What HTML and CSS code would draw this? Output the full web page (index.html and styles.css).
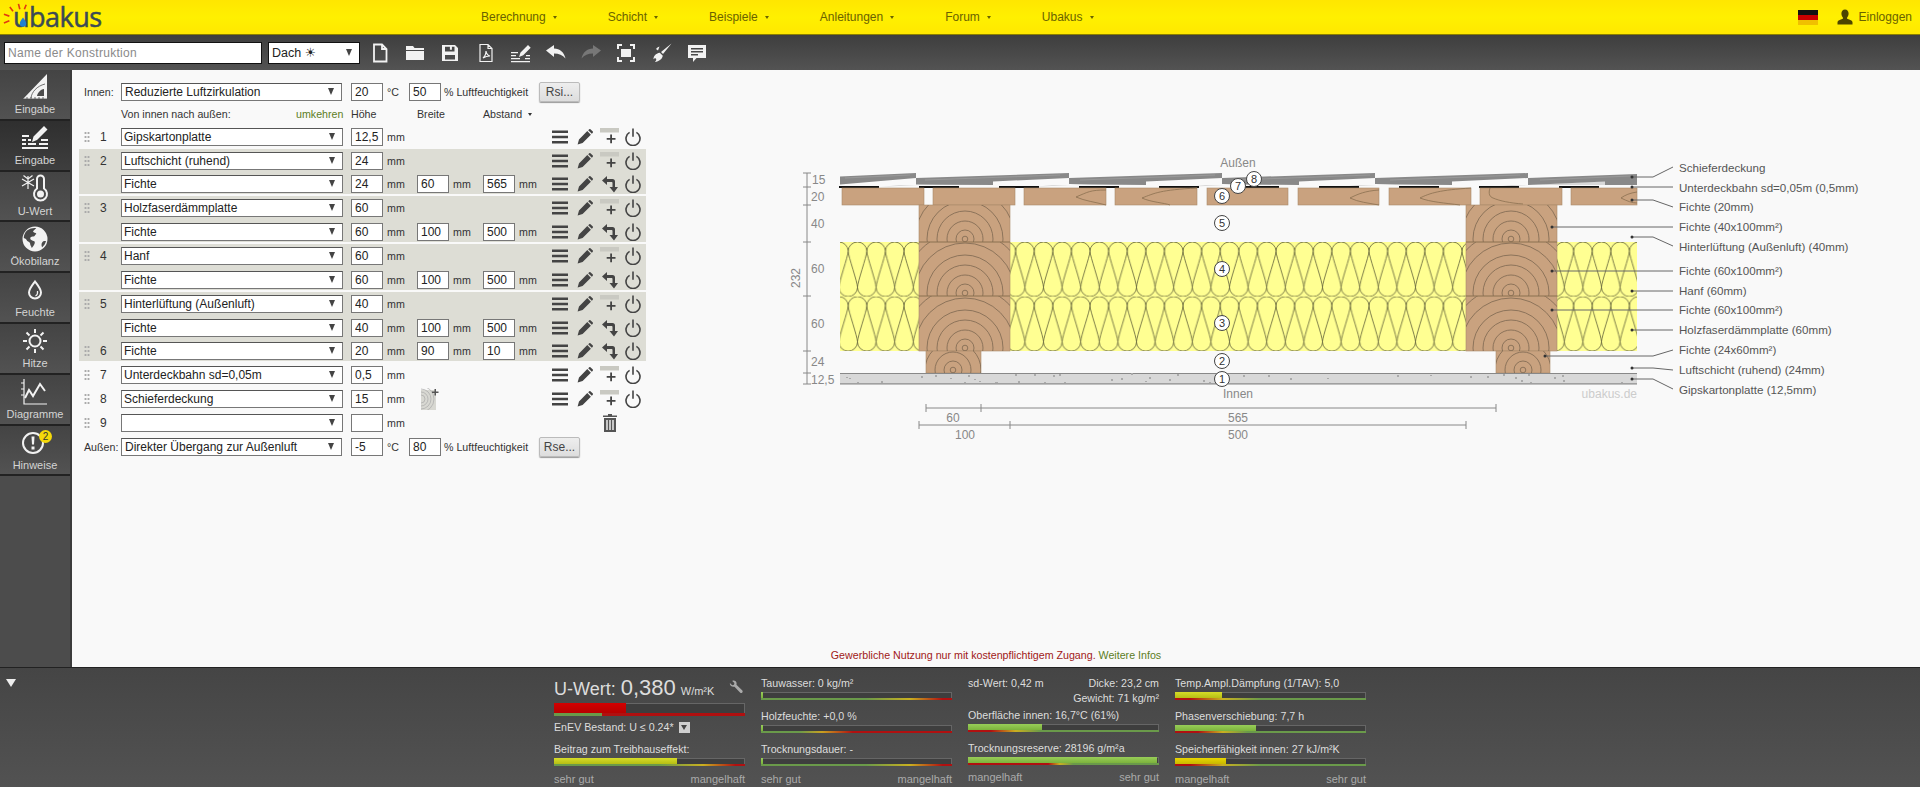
FILE: index.html
```html
<!DOCTYPE html>
<html lang="de">
<head>
<meta charset="utf-8">
<title>ubakus</title>
<link rel="stylesheet" href="styles.css">
</head>
<body>
<svg class="defs" aria-hidden="true">
  <symbol id="i-menu" viewBox="0 0 16 16"><path d="M0 1.500h16v2.600H0zM0 6.700h16v2.600H0zM0 11.900h16v2.600H0z"/></symbol>
  <symbol id="i-pencil" viewBox="0 0 16 16"><path d="M.6 15.400 2 10.400 10.300 2.100l3.600 3.600-8.300 8.300zM11.200 1.200 12 .4a1.200 1.200 0 0 1 1.700 0l1.900 1.900a1.200 1.200 0 0 1 0 1.700l-.8.8z"/></symbol>
  <symbol id="i-add" viewBox="0 0 20 20"><rect class="add-bar" x="0" y="1" width="19" height="4.500"/><path d="M10.200 7.500h1.800v3.500h3.500v1.800h-3.500v3.500h-1.800v-3.500H6.700V11h3.500z"/></symbol>
  <symbol id="i-power" viewBox="0 0 16 18"><path class="line" d="M4.600 4.400a7 7 0 1 0 6.800 0M8 .6v8.200"/></symbol>
  <symbol id="i-back" viewBox="0 0 20 20"><path d="M2 6.500 7 2v3h5.500c1.600 0 2.500.9 2.500 2.500v5.500h3L14 18.500 9.500 13h3V9c0-.6-.4-1-1-1H7v3z"/></symbol>
  <symbol id="rings" viewBox="-80 -80 160 160" overflow="visible"><g class="ring"><circle r="2.800"/><circle r="9"/><circle r="18"/><circle r="28"/><circle r="38"/><circle r="50"/><circle r="62"/></g></symbol>
  <pattern id="wool" patternUnits="userSpaceOnUse" x="848.2" y="242" width="18.6" height="54.600">
    <path class="wool-line" d="M0 9.300A9.300 9.300 0 0 1 18.600 9.300C18.600 14 9.300 40 9.300 45.300A9.300 9.300 0 0 0 27.900 45.300C27.900 40 18.600 14 18.600 9.300"/>
    <path class="wool-line" d="M-18.600 9.300A9.300 9.300 0 0 1 0 9.300C0 14-9.300 40-9.300 45.300A9.300 9.300 0 0 0 9.300 45.300C9.300 40 0 14 0 9.300"/>
  </pattern>
  <clipPath id="clip-a"><rect x="919" y="205" width="91" height="37"/></clipPath>
  <clipPath id="clip-b"><rect x="919" y="242" width="91" height="54"/></clipPath>
  <clipPath id="clip-c"><rect x="919" y="296" width="91" height="55"/></clipPath>
  <clipPath id="clip-d"><rect x="926" y="351" width="55" height="22"/></clipPath>
  <clipPath id="clip-e"><rect x="1466" y="205" width="91" height="37"/></clipPath>
  <clipPath id="clip-f"><rect x="1466" y="242" width="91" height="54"/></clipPath>
  <clipPath id="clip-g"><rect x="1466" y="296" width="91" height="55"/></clipPath>
  <clipPath id="clip-h"><rect x="1496" y="351" width="54" height="22"/></clipPath>
</svg>

<header class="topbar">
  <a class="logo">
    <svg class="logo-art" viewBox="0 0 44 34">
      <g class="logo-rays"><path d="M17 2l1.500 6M7.500 5.500l3.500 4.500M1 13.500l6 2M1 23l6-2.500M25.500 3l-2 5"/></g>
      <path class="logo-drop" d="M22 17c2.500 3.300 3.500 5 3.500 6.700a3.500 3.500 0 0 1-7 0c0-1.700 1-3.400 3.500-6.700z"/>
    </svg>
    <span>ubakus</span>
  </a>
  <nav class="menu">
    <span>Berechnung</span><span>Schicht</span><span>Beispiele</span><span>Anleitungen</span><span>Forum</span><span>Ubakus</span>
  </nav>
  <div class="account">
    <svg class="flag" viewBox="0 0 20 15"><rect width="20" height="5" fill="#111"/><rect y="5" width="20" height="5" fill="#c80000"/><rect y="10" width="20" height="5" fill="#f0c000"/></svg>
    <svg class="person" viewBox="0 0 16 16"><path d="M8 .5c2.300 0 3.600 1.700 3.600 4 0 1.700-.7 3-1.500 3.900v1.300c2.800.8 5.400 1.700 5.400 3.600v2.200H.5v-2.200c0-1.900 2.600-2.800 5.400-3.600V8.400C5.100 7.500 4.400 6.200 4.400 4.500c0-2.300 1.300-4 3.600-4z"/></svg>
    <span>Einloggen</span>
  </div>
</header>

<div class="toolbar">
  <input class="name" type="text" placeholder="Name der Konstruktion">
  <div class="sel sel-type"><select><option>Dach ☀</option></select></div>
  <div class="tools">
    <svg viewBox="0 0 20 20"><path class="tool-line" d="M4 1.500h8l4.500 4.500v12.500H4zM12 1.500V6h4.500"/></svg>
    <svg viewBox="0 0 20 20"><path d="M1 3h7l1.500 2H19v2H1zM1 8h18v9H1z"/></svg>
    <svg viewBox="0 0 20 20"><path d="M2 2h13l3 3v13H2zm3 1.800v4.700h9.500V3.800h-2.600v3h-2v-3zM5 12v4.500h10V12z" fill-rule="evenodd"/></svg>
    <svg viewBox="0 0 20 20"><path class="tool-thin" d="M4 1.500h8l4 4v13H4zM12 1.500v4h4M7 15c2-1.500 3-4 3-7 .5 3 2 4.500 4 5-2.500 0-5 .7-7 2z"/></svg>
    <svg viewBox="0 0 20 20"><path d="M0 9h7v1.300H0zM0 12h5v1.300H0zM0 15h9v1.300H0zM0 18h19v1.300H0zM14 15h5v1.300h-5zM15 12h4v1.300h-4zM8 14l1.500-4.500L17 2l2.700 2.700-7.500 7.500z"/></svg>
    <svg viewBox="0 0 20 20"><path d="M0 7.500 8 2v3.500c6 .3 10 3.500 11.500 10C16.500 12 13 10.500 8 10.500V14z"/></svg>
    <svg class="off" viewBox="0 0 20 20"><path d="M20 7.500 12 2v3.500C6 5.800 2 9 .5 15.500 3.500 12 7 10.500 12 10.500V14z"/></svg>
    <svg viewBox="0 0 20 20"><path d="M1 1h5v2H3v3H1zM14 1h5v5h-2V3h-3zM1 14h2v3h3v2H1zM17 14h2v5h-5v-2h3zM5 6h10v8H5z"/></svg>
    <svg viewBox="0 0 20 20"><path d="M19.500.500l-8.500 10.500-2-2zM7.800 9.800l3 3c-.5 3-3.500 5.700-8 6.200 1.700-1.400 1.700-3 1-3.500-.7-.5-1.800.4-2.300.8 0-3 2-5.800 6.300-6.500zM4 6c.8-1.200 2-2 3.500-2.500L6 7.500z"/></svg>
    <svg viewBox="0 0 20 20"><path d="M1 2h18v13h-9.500L6 19v-4H1zm3 3v1.500h12V5zm0 3v1.500h12V8zm0 3v1.500h7V11z" fill-rule="evenodd"/></svg>
  </div>
</div>

<div class="middle">
  <aside class="sidebar">
    <a class="nav-item">
      <svg viewBox="0 0 30 30"><path d="M3 27 27 2v25zM17 24h7v-7c-3.500.6-6.400 3.500-7 7z" fill-rule="evenodd"/><path class="nav-cut" d="M11 26c.6-6 6-12 14-14M3 27h24M7 27v-2M11 27v-2M15 27v-2M19 27v-2M23 27v-2"/></svg>
      <span>Eingabe</span>
    </a>
    <a class="nav-item active">
      <svg viewBox="0 0 30 30"><path d="M2 12h7v2H2zM2 16h4v2H2zM2 20h4v2H2zM8 16h3v2H8zM8 20h8v2H8zM2 24h26v2H2zM19 20h9v2h-9zM21 16h7v2h-7zM12 19l1.500-5.500L24 3l3.500 3.500L17 17z"/></svg>
      <span>Eingabe</span>
    </a>
    <a class="nav-item">
      <svg viewBox="0 0 30 30"><path class="nav-line" d="M17 14V5a3.500 3.500 0 0 1 7 0v9.500a6.500 6.500 0 1 1-7 0z"/><circle cx="20.500" cy="20" r="3.500"/><path class="nav-thin" d="M8 2v13M2 5l12 7M14 5 2 12M3.500 1.500 8 5l4.500-3.500"/></svg>
      <span>U-Wert</span>
    </a>
    <a class="nav-item">
      <svg viewBox="0 0 30 30"><path d="M15 2.500a12.500 12.500 0 1 1 0 25 12.500 12.500 0 0 1 0-25zM7 6.500C5 8.500 3.800 11 3.800 14c1.700.3 2.800 1.500 3.400 3 1.400 1 3 1 3 3 0 1.500 1 2 1.600 4 1.700-2 3.200-4 3-6-.2-1.500-3.400-1-4.400-3-.8-1.500 1-2.800 3-2.500 1.500 0 1.500-2 3-2.500-.7-1.800-2.700-1-3.400-2.500 1-1.500 2-2 3.200-3.300C15 3.500 10 4 7 6.500zM24 17c-1.500.5-2.500 2-2.500 4 0 .8.3 1.600.7 2.200 2-1.700 3.200-3.700 3.800-6.200z" fill-rule="evenodd"/></svg>
      <span>Ökobilanz</span>
    </a>
    <a class="nav-item">
      <svg viewBox="0 0 30 30"><path class="nav-line" d="M15 6.500c3.600 4.700 6 7.500 6 11a6 6 0 0 1-12 0c0-3.500 2.400-6.300 6-11z"/><path class="nav-thin" d="M17.500 16c.5 2.500-.5 4-2 5"/></svg>
      <span>Feuchte</span>
    </a>
    <a class="nav-item">
      <svg viewBox="0 0 30 30"><circle class="nav-line" cx="15" cy="15" r="5.500"/><path class="nav-line" d="M15 3v4M15 23v4M3 15h4M23 15h4M6.500 6.500l3 3M20.500 20.500l3 3M6.500 23.500l3-3M20.500 9.500l3-3"/></svg>
      <span>Hitze</span>
    </a>
    <a class="nav-item">
      <svg viewBox="0 0 30 30"><path class="nav-thin" d="M4 2v25h23M1 6h3M1 12h3M1 18h3"/><path class="nav-line" d="M5 21l4-8 4 6 7-12 5 7"/></svg>
      <span>Diagramme</span>
    </a>
    <a class="nav-item">
      <svg viewBox="0 0 30 30"><circle class="nav-line" cx="13" cy="15" r="10"/><path d="M11.500 8.500h3l-.5 8h-2zM11.500 18.500h3v3h-3z"/></svg>
      <span>Hinweise</span>
      <b class="badge">2</b>
    </a>
  </aside>

  <main class="content">
    <div class="work">
      <form class="form">
        <div class="env">
          <label>Innen:</label>
          <div class="sel sel-wide"><select><option>Reduzierte Luftzirkulation</option></select></div>
          <input class="num env-first" value="20"><span class="unit-c">°C</span>
          <input class="num" value="50"><span class="unit-p">% Luftfeuchtigkeit</span>
          <button type="button" class="btn">Rsi...</button>
        </div>
        <div class="heads">
          <span class="h-title">Von innen nach außen:</span>
          <a class="h-link">umkehren</a>
          <span class="h-a">Höhe</span><span class="h-b">Breite</span><span class="h-c">Abstand</span>
        </div>

        <div class="row">
          <span class="id"><i class="grip"></i><em>1</em></span>
          <div class="sel"><select><option>Gipskartonplatte</option></select></div>
          <input class="num" value="12,5"><span class="mm">mm</span>
          <div class="icons"><svg class="i16"><use href="#i-menu"/></svg><svg class="i16 gap9"><use href="#i-pencil"/></svg><svg class="i20"><use href="#i-add"/></svg><svg class="i16 pow"><use href="#i-power"/></svg></div>
        </div>

        <div class="group">
          <div class="row">
            <span class="id"><i class="grip"></i><em>2</em></span>
            <div class="sel"><select><option>Luftschicht (ruhend)</option></select></div>
            <input class="num" value="24"><span class="mm">mm</span>
            <div class="icons"><svg class="i16"><use href="#i-menu"/></svg><svg class="i16 gap9"><use href="#i-pencil"/></svg><svg class="i20"><use href="#i-add"/></svg><svg class="i16 pow"><use href="#i-power"/></svg></div>
          </div>
          <div class="row">
            <span class="id"></span>
            <div class="sel"><select><option>Fichte</option></select></div>
            <input class="num" value="24"><span class="mm">mm</span><input class="num" value="60"><span class="mm">mm</span><input class="num" value="565"><span class="mm">mm</span>
            <div class="icons"><svg class="i16"><use href="#i-menu"/></svg><svg class="i16 gap9"><use href="#i-pencil"/></svg><svg class="i20"><use href="#i-back"/></svg><svg class="i16 pow"><use href="#i-power"/></svg></div>
          </div>
        </div>

        <div class="group">
          <div class="row">
            <span class="id"><i class="grip"></i><em>3</em></span>
            <div class="sel"><select><option>Holzfaserdämmplatte</option></select></div>
            <input class="num" value="60"><span class="mm">mm</span>
            <div class="icons"><svg class="i16"><use href="#i-menu"/></svg><svg class="i16 gap9"><use href="#i-pencil"/></svg><svg class="i20"><use href="#i-add"/></svg><svg class="i16 pow"><use href="#i-power"/></svg></div>
          </div>
          <div class="row">
            <span class="id"></span>
            <div class="sel"><select><option>Fichte</option></select></div>
            <input class="num" value="60"><span class="mm">mm</span><input class="num" value="100"><span class="mm">mm</span><input class="num" value="500"><span class="mm">mm</span>
            <div class="icons"><svg class="i16"><use href="#i-menu"/></svg><svg class="i16 gap9"><use href="#i-pencil"/></svg><svg class="i20"><use href="#i-back"/></svg><svg class="i16 pow"><use href="#i-power"/></svg></div>
          </div>
        </div>

        <div class="group">
          <div class="row">
            <span class="id"><i class="grip"></i><em>4</em></span>
            <div class="sel"><select><option>Hanf</option></select></div>
            <input class="num" value="60"><span class="mm">mm</span>
            <div class="icons"><svg class="i16"><use href="#i-menu"/></svg><svg class="i16 gap9"><use href="#i-pencil"/></svg><svg class="i20"><use href="#i-add"/></svg><svg class="i16 pow"><use href="#i-power"/></svg></div>
          </div>
          <div class="row">
            <span class="id"></span>
            <div class="sel"><select><option>Fichte</option></select></div>
            <input class="num" value="60"><span class="mm">mm</span><input class="num" value="100"><span class="mm">mm</span><input class="num" value="500"><span class="mm">mm</span>
            <div class="icons"><svg class="i16"><use href="#i-menu"/></svg><svg class="i16 gap9"><use href="#i-pencil"/></svg><svg class="i20"><use href="#i-back"/></svg><svg class="i16 pow"><use href="#i-power"/></svg></div>
          </div>
        </div>

        <div class="group">
          <div class="row">
            <span class="id"><i class="grip"></i><em>5</em></span>
            <div class="sel"><select><option>Hinterlüftung (Außenluft)</option></select></div>
            <input class="num" value="40"><span class="mm">mm</span>
            <div class="icons"><svg class="i16"><use href="#i-menu"/></svg><svg class="i16 gap9"><use href="#i-pencil"/></svg><svg class="i20"><use href="#i-add"/></svg><svg class="i16 pow"><use href="#i-power"/></svg></div>
          </div>
          <div class="row">
            <span class="id"></span>
            <div class="sel"><select><option>Fichte</option></select></div>
            <input class="num" value="40"><span class="mm">mm</span><input class="num" value="100"><span class="mm">mm</span><input class="num" value="500"><span class="mm">mm</span>
            <div class="icons"><svg class="i16"><use href="#i-menu"/></svg><svg class="i16 gap9"><use href="#i-pencil"/></svg><svg class="i20"><use href="#i-back"/></svg><svg class="i16 pow"><use href="#i-power"/></svg></div>
          </div>
          <div class="row">
            <span class="id"><i class="grip"></i><em>6</em></span>
            <div class="sel"><select><option>Fichte</option></select></div>
            <input class="num" value="20"><span class="mm">mm</span><input class="num" value="90"><span class="mm">mm</span><input class="num" value="10"><span class="mm">mm</span>
            <div class="icons"><svg class="i16"><use href="#i-menu"/></svg><svg class="i16 gap9"><use href="#i-pencil"/></svg><svg class="i20"><use href="#i-back"/></svg><svg class="i16 pow"><use href="#i-power"/></svg></div>
          </div>
        </div>

        <div class="row">
          <span class="id"><i class="grip"></i><em>7</em></span>
          <div class="sel"><select><option>Unterdeckbahn sd=0,05m</option></select></div>
          <input class="num" value="0,5"><span class="mm">mm</span>
          <div class="icons"><svg class="i16"><use href="#i-menu"/></svg><svg class="i16 gap9"><use href="#i-pencil"/></svg><svg class="i20"><use href="#i-add"/></svg><svg class="i16 pow"><use href="#i-power"/></svg></div>
        </div>
        <div class="row">
          <span class="id"><i class="grip"></i><em>8</em></span>
          <div class="sel"><select><option>Schieferdeckung</option></select></div>
          <input class="num" value="15"><span class="mm">mm</span>
          <svg class="texture" viewBox="0 0 18 22"><rect x="0" y="2" width="15" height="20" fill="#d8d8d2"/><g class="ring"><circle cx="0" cy="11" r="4"/><circle cx="0" cy="11" r="7"/><circle cx="0" cy="11" r="10"/><circle cx="0" cy="11" r="13"/></g><path d="M13.500 1h1.500v2.500h2.500V5H15v2.500h-1.500V5H11V3.500h2.500z" fill="#555"/></svg>
          <div class="icons"><svg class="i16"><use href="#i-menu"/></svg><svg class="i16 gap9"><use href="#i-pencil"/></svg><svg class="i20"><use href="#i-add"/></svg><svg class="i16 pow"><use href="#i-power"/></svg></div>
        </div>
        <div class="row">
          <span class="id"><i class="grip"></i><em>9</em></span>
          <div class="sel"><select><option></option></select></div>
          <input class="num" value=""><span class="mm">mm</span>
          <div class="icons"><svg class="trash" viewBox="0 0 14 18"><path d="M5 0h4v1.500h5V3H0V1.500h5zM1 4h12v14H1zm2.300 2v10h1.400V6zm3 0v10h1.400V6zm3 0v10h1.400V6z" fill-rule="evenodd"/></svg></div>
        </div>

        <div class="env">
          <label>Außen:</label>
          <div class="sel sel-wide"><select><option>Direkter Übergang zur Außenluft</option></select></div>
          <input class="num env-first" value="-5"><span class="unit-c">°C</span>
          <input class="num" value="80"><span class="unit-p">% Luftfeuchtigkeit</span>
          <button type="button" class="btn">Rse...</button>
        </div>
      </form>

      <svg class="drawing" viewBox="780 150 1140 300">
        <!-- slates -->
        <path class="sheet" d="M880 187 993 181v4H900zM1033 187l113-6v4h-93zM1186 187l113-6v4h-93zM1339 187l113-6v4h-93zM1492 187l113-6v4h-93z"/>
        <path class="slate" d="M840 176.500 916 173v5l-76 6.500zM916 178 1069 173v5l-76 3.500v3.500L916 184.500zM1069 178 1222 173v5l-76 3.500v3.500l-77-1zM1222 178 1375 173v5l-76 3.500v3.500l-77-1zM1375 178 1528 173v5l-76 3.500v3.500l-77-1zM1528 178 1637 174v11h-32v-3.500l-77 3.500z"/>
        <path class="slate-shine" d="M845 178 910 175M925 180 1060 175M1080 180 1215 175M1235 180 1370 175M1390 180 1520 175M1540 180 1630 176"/>
        <path class="felt" d="M839 187H1637"/>
        <!-- battens -->
        <g class="wood">
          <rect x="842" y="188" width="82" height="17"/><rect x="933" y="188" width="82" height="17"/><rect x="1024" y="188" width="82" height="17"/><rect x="1115" y="188" width="82" height="17"/><rect x="1207" y="188" width="81" height="17"/><rect x="1298" y="188" width="81" height="17"/><rect x="1389" y="188" width="82" height="17"/><rect x="1480" y="188" width="82" height="17"/><rect x="1571" y="188" width="66" height="17"/>
        </g>
        <path class="grain" d="M1106 190C1090 190 1088 192 1076 197 1085 201 1095 202 1106 205M1197 188C1160 190 1155 193 1142 198 1150 202 1165 203 1170 205M1379 190C1365 191 1358 194 1350 198 1358 202 1368 203 1379 205M1471 188C1440 190 1430 193 1420 198 1430 202 1445 203 1460 205M1490 188C1488 194 1490 197 1493 198 1500 201 1510 203 1523 204M1637 192C1630 193 1625 195 1621 198 1627 201 1632 203 1637 203"/>
        <!-- insulation -->
        <rect class="wool-base" x="840" y="242" width="797" height="109"/>
        <rect x="840" y="242" width="797" height="54.600" fill="url(#wool)"/>
        <rect x="840" y="296.600" width="797" height="54.400" fill="url(#wool)"/>
        <!-- timbers -->
        <g class="wood">
          <rect x="919" y="205" width="91" height="146"/><rect x="926" y="351" width="55" height="22"/>
          <rect x="1466" y="205" width="91" height="146"/><rect x="1496" y="351" width="54" height="22"/>
        </g>
        <g class="ring">
          <g clip-path="url(#clip-a)"><use href="#rings" x="885" y="159" width="160" height="160"/></g>
          <g clip-path="url(#clip-b)"><use href="#rings" x="885" y="213" width="160" height="160"/></g>
          <g clip-path="url(#clip-c)"><use href="#rings" x="885" y="268" width="160" height="160"/></g>
          <g clip-path="url(#clip-d)"><use href="#rings" x="873" y="290" width="160" height="160"/></g>
          <g clip-path="url(#clip-e)"><use href="#rings" x="1431" y="159" width="160" height="160"/></g>
          <g clip-path="url(#clip-f)"><use href="#rings" x="1431" y="213" width="160" height="160"/></g>
          <g clip-path="url(#clip-g)"><use href="#rings" x="1431" y="268" width="160" height="160"/></g>
          <g clip-path="url(#clip-h)"><use href="#rings" x="1443" y="290" width="160" height="160"/></g>
        </g>
        <path class="edge" d="M919 242H1010M919 296H1010M1466 242H1557M1466 296H1557"/>
        <!-- plasterboard -->
        <rect class="gyps" x="840" y="373.500" width="797" height="10"/>
        <path class="gyps-line" d="M840 373.500H1637M840 383.800H1637"/>
        <path class="speck" d="M846 377h2v1h-2zM849 378h2v1h-2zM857 382h2v1h-2zM881 381h2v2h-2zM921 376h2v2h-2zM935 375h2v2h-2zM950 378h2v1h-2zM964 382h2v1h-2zM968 375h2v2h-2zM974 379h2v1h-2zM979 381h2v1h-2zM995 382h3v1h-3zM1015 374h2v2h-2zM1018 381h2v2h-2zM1034 374h2v2h-2zM1044 382h2v1h-2zM1053 375h2v2h-2zM1059 374h2v2h-2zM1064 382h2v1h-2zM1111 379h2v2h-2zM1121 378h2v2h-2zM1131 373h2v2h-2zM1145 381h2v1h-2zM1149 377h2v2h-2zM1169 379h2v2h-2zM1177 374h2v2h-2zM1203 380h2v2h-2zM1209 382h2v1h-2zM1243 375h2v2h-2zM1268 375h2v2h-2zM1290 378h2v2h-2zM1327 378h2v1h-2zM1397 375h2v2h-2zM1430 375h2v1h-2zM1470 376h2v2h-2zM1487 376h2v2h-2zM1503 374h2v2h-2zM1515 377h2v2h-2zM1521 380h2v2h-2zM1528 374h2v2h-2zM1530 382h2v1h-2zM1554 377h2v2h-2zM1562 375h2v2h-2zM1563 380h2v2h-2zM1621 382h2v1h-2z"/>
        <!-- dimensions -->
        <path class="dim" d="M807 173V384M803 173h8M803 187h8M803 205h8M803 242h8M803 296h8M803 351h8M803 373h8M803 384h8M926 408H1496M926 404v8M981 404v8M1496 404v8M919 425H1466M919 421v8M1010 421v8M1466 421v8"/>
        <g class="dim-text">
          <text x="812" y="184">15</text><text x="811" y="201">20</text><text x="811" y="228">40</text><text x="811" y="273">60</text><text x="811" y="328">60</text><text x="811" y="366">24</text><text x="811" y="384">12,5</text>
          <text x="797" y="278" transform="rotate(-90 797 278)" text-anchor="middle" dominant-baseline="middle">232</text>
          <text x="953" y="422" text-anchor="middle">60</text><text x="1238" y="422" text-anchor="middle">565</text>
          <text x="965" y="439" text-anchor="middle">100</text><text x="1238" y="439" text-anchor="middle">500</text>
          <text x="1238" y="167" text-anchor="middle">Außen</text><text x="1238" y="398" text-anchor="middle">Innen</text>
        </g>
        <text class="mark" x="1637" y="398" text-anchor="end">ubakus.de</text>
        <!-- layer numbers -->
        <g class="badges">
          <circle cx="1222" cy="379" r="7.500"/><circle cx="1222" cy="361" r="7.500"/><circle cx="1222" cy="323" r="7.500"/><circle cx="1222" cy="269" r="7.500"/><circle cx="1222" cy="223" r="7.500"/><circle cx="1222" cy="196" r="7.500"/><circle cx="1238" cy="186" r="7.500"/><circle cx="1254" cy="179" r="7.500"/>
        </g>
        <g class="badge-text" text-anchor="middle">
          <text x="1222" y="383">1</text><text x="1222" y="365">2</text><text x="1222" y="327">3</text><text x="1222" y="273">4</text><text x="1222" y="227">5</text><text x="1222" y="200">6</text><text x="1238" y="190">7</text><text x="1254" y="183">8</text>
        </g>
        <!-- callouts -->
        <path class="leader" d="M1632 177h21l20-10M1632 187h21l20 0M1632 200h21l20 7M1552 227h121M1632 237h21l20 9M1552 271h121M1632 291h41M1552 310h121M1632 330h41M1545 356h108l20-6M1632 368h21l20 2M1632 379h21l20 10"/>
        <g class="dots">
          <circle cx="1632" cy="177" r="1.500"/><circle cx="1632" cy="187" r="1.500"/><circle cx="1632" cy="200" r="1.500"/><circle cx="1552" cy="227" r="1.500"/><circle cx="1632" cy="237" r="1.500"/><circle cx="1552" cy="271" r="1.500"/><circle cx="1632" cy="291" r="1.500"/><circle cx="1552" cy="310" r="1.500"/><circle cx="1632" cy="330" r="1.500"/><circle cx="1545" cy="356" r="1.500"/><circle cx="1632" cy="368" r="1.500"/><circle cx="1632" cy="379" r="1.500"/>
        </g>
        <g class="legend">
          <text x="1679" y="172">Schieferdeckung</text>
          <text x="1679" y="192">Unterdeckbahn sd=0,05m (0,5mm)</text>
          <text x="1679" y="211">Fichte (20mm)</text>
          <text x="1679" y="231">Fichte (40x100mm²)</text>
          <text x="1679" y="251">Hinterlüftung (Außenluft) (40mm)</text>
          <text x="1679" y="275">Fichte (60x100mm²)</text>
          <text x="1679" y="295">Hanf (60mm)</text>
          <text x="1679" y="314">Fichte (60x100mm²)</text>
          <text x="1679" y="334">Holzfaserdämmplatte (60mm)</text>
          <text x="1679" y="354">Fichte (24x60mm²)</text>
          <text x="1679" y="374">Luftschicht (ruhend) (24mm)</text>
          <text x="1679" y="394">Gipskartonplatte (12,5mm)</text>
        </g>
      </svg>
    </div>
    <p class="notice"><span>Gewerbliche Nutzung nur mit kostenpflichtigem Zugang.</span> <a>Weitere Infos</a></p>
  </main>
</div>

<footer class="results">
  <span class="collapse"></span>
  <section class="col">
    <div class="u-line"><span>U-Wert:</span> <strong>0,380</strong> <small>W/m²K</small>
      <svg class="wrench" viewBox="0 0 16 16"><path d="M1 3.500 3.700 6l2-.5L6.200 3.500 3.700 1c2.500-1 5 .5 5 3 0 .5 0 1-.2 1.400l6.500 6.400c.8 1 .8 1.700.2 2.500-.8.800-1.800.8-2.600 0L6.300 7.600C3.800 8.500.5 6.500 1 3.500z"/></svg>
    </div>
    <div class="bar big"><i class="f-red" style="width:38%"></i></div>
    <div class="scale-line s-u"></div>
    <div class="enev">EnEV Bestand: U ≤ 0.24* <span class="pick"></span></div>
    <div class="metric after-enev"><div class="m-label">Beitrag zum Treibhauseffekt:</div><div class="bar"><i class="f-lime" style="width:65%"></i></div><div class="scale-line s-high"></div></div>
    <div class="scale"><span>sehr gut</span><span>mangelhaft</span></div>
  </section>
  <section class="col">
    <div class="metric"><div class="m-label">Tauwasser: 0 kg/m²</div><div class="bar"><i class="f-green" style="width:1%"></i></div><div class="scale-line s-high"></div></div>
    <div class="metric"><div class="m-label">Holzfeuchte: +0,0 %</div><div class="bar"><i class="f-green" style="width:1%"></i></div><div class="scale-line s-mid"></div></div>
    <div class="metric"><div class="m-label">Trocknungsdauer: -</div><div class="bar"><i class="f-green" style="width:1%"></i></div><div class="scale-line s-high"></div></div>
    <div class="scale"><span>sehr gut</span><span>mangelhaft</span></div>
  </section>
  <section class="col col-sd">
    <div class="sd"><div class="sd-top"><span>sd-Wert: 0,42 m</span><span>Dicke: 23,2 cm</span></div><div class="sd-end">Gewicht: 71 kg/m²</div></div>
    <div class="metric"><div class="m-label">Oberfläche innen: 16,7°C (61%)</div><div class="bar"><i class="f-green" style="width:39%"></i></div><div class="scale-line s-rise1"></div></div>
    <div class="metric"><div class="m-label">Trocknungsreserve: 28196 g/m²a</div><div class="bar"><i class="f-green" style="width:100%"></i></div><div class="scale-line s-rise2"></div></div>
    <div class="scale"><span>mangelhaft</span><span>sehr gut</span></div>
  </section>
  <section class="col">
    <div class="metric"><div class="m-label">Temp.Ampl.Dämpfung (1/TAV): 5,0</div><div class="bar"><i class="f-lime" style="width:25%"></i></div><div class="scale-line s-rise3"></div></div>
    <div class="metric"><div class="m-label">Phasenverschiebung: 7,7 h</div><div class="bar"><i class="f-green" style="width:43%"></i></div><div class="scale-line s-rise1"></div></div>
    <div class="metric"><div class="m-label">Speicherfähigkeit innen: 27 kJ/m²K</div><div class="bar"><i class="f-yellow" style="width:27%"></i></div><div class="scale-line s-rise3"></div></div>
    <div class="scale"><span>mangelhaft</span><span>sehr gut</span></div>
  </section>
</footer>
</body>
</html>
```

FILE: styles.css
```css
* { box-sizing: border-box; }
html, body { height: 100%; }
body {
  margin: 0;
  display: flex;
  flex-direction: column;
  height: 787px;
  overflow: hidden;
  background: #f9f9f9;
  color: #333;
  font: 10.67px "Liberation Sans", Arial, sans-serif;
}
.defs { position: absolute; width: 0; height: 0; }

/* top bar */
.topbar {
  display: flex;
  align-items: center;
  height: 35px;
  flex: none;
  background: linear-gradient(#ffe600, #fff000 50%, #ffe800);
  border-bottom: 1px solid #8a7f00;
  color: #6a6200;
}
.logo { position: relative; display: block; width: 110px; height: 34px; }
.logo span {
  position: absolute;
  left: 13px;
  top: 0;
  color: #3b4a55;
  font: 400 27px/34px "Open Sans", sans-serif;
  letter-spacing: -.5px;
  -webkit-text-stroke: .5px #3b4a55;
}
.logo-art { position: absolute; left: 3px; top: 2px; width: 40px; height: 31px; z-index: 1; }
.logo-rays path { fill: none; stroke: #e23a10; stroke-width: 1.800; }
.logo-drop { fill: #1f82d0; }
.menu { display: flex; gap: 51px; margin-left: 371px; font-size: 12px; }
.menu span::after {
  content: "";
  display: inline-block;
  margin-left: 7px;
  vertical-align: 2px;
  border: 2.500px solid transparent;
  border-top: 3.500px solid #6a6200;
  border-bottom: 0;
}
.account { display: flex; align-items: center; margin-left: auto; font-size: 12px; padding-right: 8px; }
.flag { width: 20px; height: 15px; margin-right: 19px; }
.person { width: 16px; height: 16px; margin-right: 6px; fill: #4d4500; }

/* tool bar */
.toolbar {
  display: flex;
  align-items: center;
  height: 35px;
  flex: none;
  padding-left: 4px;
  background: linear-gradient(#3e3e3e, #535353);
}
.name {
  width: 258px;
  height: 22px;
  border: 1px solid #111;
  padding: 0 3px;
  font: 12px "Liberation Sans", sans-serif;
  letter-spacing: .3px;
  background: #fff;
}
.name::placeholder { color: #8a8a8a; opacity: 1; }
.sel { position: relative; width: 222px; height: 18px; }
.sel select {
  display: block;
  width: 100%;
  height: 100%;
  padding: 0 16px 0 2px;
  appearance: none;
  background: #fff;
  color: #222;
  border: 1px solid #777;
  border-top-color: #555;
  border-radius: 0;
  font: 12px "Liberation Sans", "DejaVu Sans", sans-serif;
}
.sel::after {
  content: "";
  position: absolute;
  right: 8px;
  top: 5px;
  border: 3.500px solid transparent;
  border-top: 7px solid #444;
  border-bottom: 0;
  pointer-events: none;
}
.sel-type { width: 92px; height: 22px; margin-left: 6px; }
.sel-type select { border-color: #111; padding-left: 3px; font-size: 12.500px; }
.sel-type::after { top: 7px; }
.sel-wide { width: 221px; }
.sel-wide select { padding-left: 3px; }
.tools { display: flex; gap: 15.200px; margin-left: 10px; }
.tools svg { width: 20px; height: 20px; fill: #f2f2f2; }
.tools svg.off { fill: #777; }
.tool-line { fill: none; stroke: #f2f2f2; stroke-width: 1.800; }
.tool-thin { fill: none; stroke: #f2f2f2; stroke-width: 1.200; }

/* middle */
.middle { display: flex; flex: 1; min-height: 0; }
.sidebar {
  width: 72px;
  flex: none;
  background: #4c4c4c;
  border-right: 2px solid #3c3c3c;
}
.nav-item {
  position: relative;
  display: flex;
  flex-direction: column;
  align-items: center;
  height: 50.800px;
  padding-top: 2px;
  color: #d4d4d4;
  font-size: 11px;
  background: linear-gradient(#444, #525252);
  border-bottom: 2px solid #222;
}
.nav-item.active { background: linear-gradient(#2f2f2f, #3e3e3e); }
.nav-item svg { width: 30px; height: 30px; fill: #f2f2f2; }
.nav-item span { line-height: 14px; }
.nav-line { fill: none; stroke: #f2f2f2; stroke-width: 2; }
.nav-thin { fill: none; stroke: #f2f2f2; stroke-width: 1.200; }
.nav-cut { fill: none; stroke: #4c4c4c; stroke-width: .8; }
.badge {
  position: absolute;
  left: 39px;
  top: 4px;
  width: 13px;
  height: 13px;
  border-radius: 50%;
  background: #f5d90a;
  color: #333;
  font: 400 10px/13px "Liberation Sans", sans-serif;
  text-align: center;
}

/* content */
.content { flex: 1; min-width: 0; display: flex; flex-direction: column; }
.work { display: flex; flex: 1; min-height: 0; }
.form { width: 708px; flex: none; padding: 10px 0 0 7px; }
.env { display: flex; align-items: center; height: 23.850px; }
.env label { width: 42px; padding-left: 5px; }
.num {
  width: 32px;
  height: 18px;
  padding: 0 3px;
  background: #fff;
  color: #222;
  border: 1px solid #777;
  border-radius: 0;
  font: 12px "Liberation Sans", sans-serif;
}
.env-first { margin-left: 9px; }
.unit-c { width: 26px; padding-left: 4px; }
.unit-p { width: 98px; padding-left: 3px; white-space: nowrap; }
.btn {
  width: 41px;
  height: 20px;
  padding: 0;
  background: linear-gradient(#eee, #ddd);
  border: 1px solid #bbb;
  border-radius: 2px;
  box-shadow: 0 1px 1px #999;
  color: #444;
  font: 12px "Liberation Sans", sans-serif;
}
.heads { position: relative; display: flex; align-items: center; height: 21px; padding-left: 42px; }
.h-title { width: 154px; }
.h-link { width: 76px; color: #5c7d1e; padding-left: 21px; white-space: nowrap; }
.h-a { width: 66px; }
.h-b { width: 66px; }
.h-c::after {
  content: "";
  display: inline-block;
  margin-left: 6px;
  vertical-align: 2px;
  border: 2px solid transparent;
  border-top: 3px solid #333;
  border-bottom: 0;
}
.row {
  display: grid;
  grid-template-columns: 42px 230px 32px 34px 32px 34px 32px 37px 94px;
  align-items: center;
  height: 23.850px;
  width: 567px;
}
.id { display: flex; align-items: center; height: 14px; }
.grip {
  display: block;
  width: 6px;
  height: 12px;
  margin-left: 5px;
  background: radial-gradient(circle, #aaa 1px, transparent 1.200px) 0 0 / 3px 4px;
}
.id em { font-style: normal; margin-left: 10px; font-size: 12px; }
.mm { padding-left: 4px; }
.icons { grid-column: 9; display: flex; align-items: center; height: 20px; fill: #444; }
.i16 { width: 16px; height: 16px; flex: none; }
.i20 { width: 20px; height: 20px; flex: none; margin-left: 7px; }
.gap9 { margin-left: 9px; }
.pow { margin-left: 5px; height: 18px; }
.line { fill: none; stroke: #444; stroke-width: 1.600; }
.add-bar { fill: #c9c9c2; }
.group { width: 567px; background: #ddddd5; box-shadow: inset 0 -2px 0 #f9f9f9; }
.texture { grid-column: 5; width: 18px; height: 22px; margin-left: 4px; }
.texture .ring { stroke: #aaa; stroke-width: .7; }
.trash { width: 14px; height: 18px; margin-left: 51px; fill: #555; }

/* drawing */
.drawing { width: 1140px; height: 300px; margin-top: 80px; flex: none; }
.sheet { fill: #d8d8d8; }
.slate { fill: #898989; }
.slate-shine { fill: none; stroke: #aaa; stroke-width: .5; }
.felt { stroke: #111; stroke-width: 2; stroke-dasharray: 40 40; fill: none; }
.wood rect { fill: #c9a27f; stroke: #a98a6a; stroke-width: .6; }
.grain { fill: none; stroke: #8a7050; stroke-width: .8; }
.ring { fill: none; stroke: #7c6750; stroke-width: .8; }
.edge { stroke: #8a7050; stroke-width: 1; fill: none; }
.wool-base { fill: #ffff92; }
.wool-line { fill: none; stroke: #6e6e40; stroke-width: .9; }
.gyps { fill: #d8d8d8; }
.gyps-line { stroke: #888; stroke-width: 1.200; fill: none; }
.speck { fill: #aaa; }
.dim { fill: none; stroke: #888; stroke-width: 1; }
.dim-text { fill: #888; font: 12px "Liberation Sans", sans-serif; }
.mark { fill: #ccc; font: 12px "Liberation Sans", sans-serif; }
.badges circle { fill: #fff; stroke: #444; stroke-width: 1; }
.badge-text { fill: #333; font: 11px "Liberation Sans", sans-serif; }
.leader { fill: none; stroke: #666; stroke-width: 1; }
.dots { fill: #333; }
.legend { fill: #555; font: 11.600px "Liberation Sans", sans-serif; }

.notice { margin: 0; height: 19px; text-align: center; line-height: 14px; color: #a01818; }
.notice a { color: #5c7d1e; }

/* results */
.results {
  position: relative;
  display: flex;
  justify-content: center;
  gap: 16px;
  height: 120px;
  flex: none;
  padding: 8px 0 0 0;
  background: linear-gradient(#454545, #525252);
  border-top: 1px solid #222;
  color: #ddd;
}
.collapse {
  position: absolute;
  left: 6px;
  top: 11px;
  border: 5px solid transparent;
  border-top: 8px solid #eee;
  border-bottom: 0;
}
.col { width: 191px; }
.u-line { position: relative; height: 27px; font: 18px/24px "Liberation Sans", sans-serif; white-space: nowrap; }
.u-line strong { font-weight: 400; font-size: 22px; }
.u-line small { font-size: 11px; }
.wrench { position: absolute; right: 2px; top: 4px; width: 14px; height: 14px; fill: #aaa; }
.bar {
  display: block;
  height: 6px;
  border: 1px solid #666;
  border-bottom: 0;
  background: #3e3e3e;
}
.bar i { display: block; margin: -1px 0 0 -1px; height: 6px; }
.bar.big { height: 10px; }
.bar.big i { height: 10px; }
.f-red { background: linear-gradient(#d20000, #b80000); }
.f-lime { background: linear-gradient(#d6dc28, #b6be14); }
.f-green { background: linear-gradient(#98cd58, #7cb23c); }
.f-yellow { background: linear-gradient(#e8d600, #c9b800); }
.scale-line { height: 2px; background: #6a9a4a; }
.s-u { height: 3px; background: linear-gradient(90deg, #6a9a4a 25%, #b01010 25%); }
.s-high { background: linear-gradient(90deg, #6a9a4a 55%, #c9b020 78%, #b01010 95%); }
.s-mid { background: linear-gradient(90deg, #6a9a4a 20%, #c9a020 32%, #b01010 48%); }
.s-rise1 { background: linear-gradient(90deg, #b01010 12%, #c9b020 25%, #6a9a4a 38%); }
.s-rise2 { background: linear-gradient(90deg, #b01010 42%, #c9b020 48%, #6a9a4a 55%); }
.s-rise3 { background: linear-gradient(90deg, #b01010 8%, #c9b020 25%, #6a9a4a 45%); }
.enev { display: flex; align-items: center; gap: 5px; height: 14px; margin-top: 4px; white-space: nowrap; }
.pick {
  position: relative;
  width: 11px;
  height: 11px;
  background: #cfcfcf;
}
.pick::after {
  content: "";
  position: absolute;
  left: 2px;
  top: 3px;
  border: 3.500px solid transparent;
  border-top: 5px solid #444;
  border-bottom: 0;
}
.metric { height: 33px; }
.after-enev { margin-top: 8px; }
.m-label { height: 16px; line-height: 14px; white-space: nowrap; }
.scale { display: flex; justify-content: space-between; line-height: 14px; margin-top: -3px; color: #aaa; font-size: 11px; }
.sd { height: 32px; line-height: 15px; }
.sd-top { display: flex; justify-content: space-between; }
.sd-end { text-align: right; }
.col-sd .scale { margin-top: -4px; }
```
